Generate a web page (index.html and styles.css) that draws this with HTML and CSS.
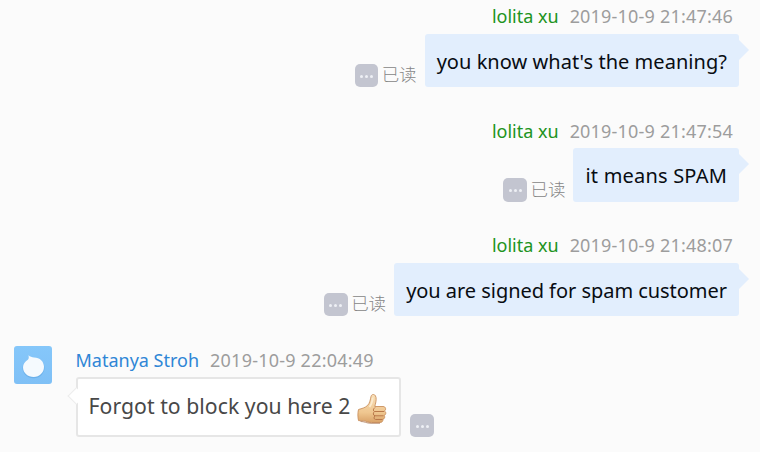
FILE: index.html
```html
<!DOCTYPE html>
<html lang="zh">
<head>
    <meta charset="UTF-8">
    <meta name="viewport" content="width=device-width, initial-scale=1.0">
    <title>Chat</title>
    <link rel="stylesheet" href="styles.css">
</head>
<body>

<div class="chat">
    <div class="message sent">
        <div class="meta"><span class="name">lolita xu</span><span class="time">2019-10-9 21:47:46</span></div>
        <div class="row">
            <span class="more"><i></i><i></i><i></i></span>
            <span class="status">已读</span>
            <div class="bubble">you know what's the meaning?</div>
        </div>
    </div>

    <div class="message sent">
        <div class="meta"><span class="name">lolita xu</span><span class="time">2019-10-9 21:47:54</span></div>
        <div class="row">
            <span class="more"><i></i><i></i><i></i></span>
            <span class="status">已读</span>
            <div class="bubble loose">it means SPAM</div>
        </div>
    </div>

    <div class="message sent">
        <div class="meta"><span class="name">lolita xu</span><span class="time">2019-10-9 21:48:07</span></div>
        <div class="row">
            <span class="more"><i></i><i></i><i></i></span>
            <span class="status">已读</span>
            <div class="bubble tight">you are signed for spam customer</div>
        </div>
    </div>

    <div class="message received">
        <svg class="avatar" viewBox="0 0 38 38">
            <defs>
                <linearGradient id="sky" x1="0" y1="0" x2="0" y2="1">
                    <stop offset="0" stop-color="#85c7fa"/>
                    <stop offset="1" stop-color="#7fc0f6"/>
                </linearGradient>
            </defs>
            <rect width="38" height="38" rx="3" fill="url(#sky)"/>
            <path d="M14.5 10.5C16 11.8 18 12.2 20 12.2C26 12.2 30.5 16 30.5 21.6C30.5 27.8 25.7 32.3 19.7 32.3C13.5 32.3 8.5 27.8 8.5 22C8.5 18.7 10.7 16 13.6 14.2C14.7 13.4 14.8 12 14.5 10.5Z" fill="#5da6e3" opacity=".6"/>
            <path d="M14.5 9.3C16 10.8 18 11.4 20 11.4C25.9 11.4 30 15.4 30 20.8C30 26.8 25.5 31 19.7 31C13.8 31 9 26.8 9 21.2C9 18 11 15.5 13.8 13.7C14.8 13 14.9 11.4 14.5 9.3Z" fill="#f5fafe"/>
        </svg>
        <div class="content">
            <div class="meta"><span class="name">Matanya Stroh</span><span class="time">2019-10-9 22:04:49</span></div>
            <div class="row">
                <div class="bubble">Forgot to block you here 2
                    <svg class="thumb" viewBox="0 0 30 31">
                        <defs>
                            <linearGradient id="skin" x1="0" y1="0" x2="0" y2="1">
                                <stop offset="0" stop-color="#f8dfb8"/>
                                <stop offset=".65" stop-color="#efc68f"/>
                                <stop offset="1" stop-color="#d9a268"/>
                            </linearGradient>
                        </defs>
                        <path d="M1.500 16.500C5 15.500 8 14.800 10.500 12.500C13 10 13.300 6.500 14 3.500C14.500 1.200 17 .8 18.300 2.600C19.700 4.700 19.200 8 18.300 11.500L17.800 13.500H26C29 13.500 29.300 17 27.500 18C29.500 19 29 22 27 22.500C28.400 23.600 27.700 26 25.800 26.300C26.300 28 25 29.500 23.200 29.500H14.500C10.500 29.500 9 28 6.500 27.800L1.500 27.600C.7 24 .7 20 1.500 16.500Z" fill="url(#skin)" stroke="#c9905e" stroke-width=".9"/>
                        <path d="M18 14.500C16 16 15.800 18 17.500 18.500H27M17.500 18.500C15.700 20 16 22.300 18 22.800H26.500M18 22.800C16.500 24.200 16.800 26.200 18.500 26.500H25.500" fill="none" stroke="#b9784a" stroke-width="1"/>
                        <path d="M15.800 4.500C15.500 8 14.500 11.500 12.500 14" fill="none" stroke="#fcebcd" stroke-width="1.800"/>
                        <path d="M3.500 28.500C7 28.300 9.500 30.300 14 30.300H23" fill="none" stroke="#a66f48" stroke-width=".7"/>
                    </svg>
                </div>
                <span class="more"><i></i><i></i><i></i></span>
            </div>
        </div>
    </div>
</div>

</body>
</html>
```
FILE: styles.css
```css
body {
    margin: 0;
    background-color: #fbfbfb;
    font-family: "Noto Sans", "Noto Sans CJK SC", sans-serif;
}

.chat {
    height: 452px;
    overflow: hidden;
}

.message {
    box-sizing: border-box;
}

.sent {
    height: 114.5px;
    padding-right: 21px;
}

.meta {
    display: flex;
    gap: 11px;
    height: 33.5px;
    line-height: 33px;
    font-size: 18px;
    white-space: nowrap;
}

.sent .meta {
    justify-content: flex-end;
    padding-right: 6px;
}

.name {
    color: #219321;
}

.time {
    color: #9d9d9d;
    letter-spacing: 0.2px;
}

.row {
    display: flex;
    align-items: flex-end;
}

.sent .row {
    justify-content: flex-end;
}

.bubble {
    position: relative;
    box-sizing: border-box;
    height: 53.5px;
    padding: 0 12px;
    border-radius: 3px;
    background-color: #e2eefd;
    color: #080c12;
    font-size: 20px;
    letter-spacing: 0.04px;
    line-height: 55px;
    white-space: nowrap;
}

.loose {
    letter-spacing: 0.2px;
}

.tight {
    letter-spacing: -0.04px;
}

/* bubble tail */
.sent .bubble::after {
    content: "";
    position: absolute;
    top: 6px;
    left: 100%;
    border: 10px solid transparent;
    border-left-color: #e2eefd;
    border-right-width: 0;
}

.status {
    margin: 0 8px 0 3.5px;
    color: #868686;
    font-family: "Noto Sans CJK SC", sans-serif;
    font-size: 17.5px;
    font-weight: 300;
    line-height: 27px;
}

.more {
    display: flex;
    justify-content: center;
    align-items: center;
    gap: 2px;
    width: 23.5px;
    height: 23.5px;
    border-radius: 5px;
    background-color: #c3c5d0;
}

.more i {
    width: 3px;
    height: 3px;
    margin-top: 2px;
    border-radius: 50%;
    background-color: #eef0f5;
}

.received {
    display: flex;
    padding: 2px 0 0 14px;
}

.avatar {
    width: 38px;
    height: 38px;
}

.content {
    margin-left: 23.5px;
}

.received .meta {
    height: 31.5px;
    line-height: 29px;
}

.received .name {
    color: #2f86d6;
}

.received .time {
    letter-spacing: 0.22px;
}

.received .bubble {
    display: flex;
    align-items: center;
    gap: 7px;
    height: 60px;
    padding: 0 12px 3px 11px;
    border: 2px solid #e6e6e6;
    background-color: #fff;
    color: #484848;
    font-size: 21.2px;
    line-height: 53px;
}

.received .bubble::before {
    content: "";
    position: absolute;
    top: 11px;
    left: -8px;
    width: 12px;
    height: 12px;
    box-sizing: border-box;
    border-left: 1px solid #ececec;
    border-bottom: 1px solid #ececec;
    background-color: #fff;
    transform: rotate(45deg);
}

.received .more {
    margin-left: 9px;
}

.thumb {
    width: 30px;
    height: 31px;
    margin-top: 6px;
}
```
